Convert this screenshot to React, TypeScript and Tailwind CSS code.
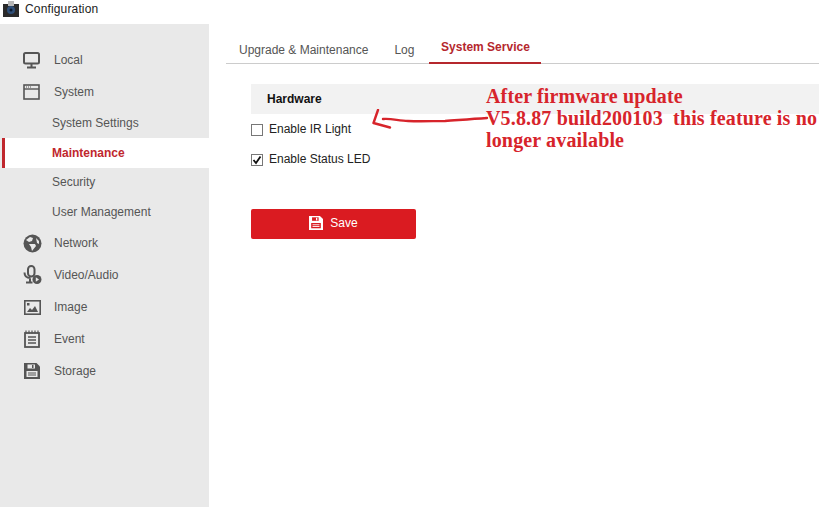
import React from 'react';

const font = { fontFamily: '"Liberation Sans", Arial, sans-serif' };

const MonitorIcon = () => (
  <svg width="18" height="17" viewBox="0 0 18 17" fill="none">
    <rect x="1" y="1" width="15" height="10.5" rx="1.5" stroke="#555" strokeWidth="2" />
    <path d="M8.5 12v3M4 15.5h9" stroke="#555" strokeWidth="2" />
  </svg>
);

const SystemIcon = () => (
  <svg width="18" height="16" viewBox="0 0 18 16" fill="none">
    <rect x="1" y="1" width="15" height="14" stroke="#555" strokeWidth="1.6" />
    <path d="M1 5h15" stroke="#555" strokeWidth="1.4" />
    <path d="M3 3h1M5 3h1M7 3h1" stroke="#555" strokeWidth="1" />
  </svg>
);

const GlobeIcon = () => (
  <svg width="19" height="19" viewBox="0 0 19 19">
    <circle cx="9.5" cy="9.5" r="9" fill="#555" />
    <path d="M3 6l4-3 3 1-1 3-3 1zM6 10l6 0 1 2-4 5-1-4zM13 4l3 3 0 3-2-1z" fill="#e9e9e9" />
  </svg>
);

const VideoAudioIcon = () => (
  <svg width="19" height="20" viewBox="0 0 19 20" fill="none">
    <rect x="5" y="1" width="6.500" height="10.500" rx="3.250" stroke="#555" strokeWidth="2" />
    <path d="M1.500 7.500c0 3.500 2 5.500 6 5.500M7 13.500v3M3 17.500h6.500" stroke="#555" strokeWidth="2" />
    <circle cx="14" cy="14.500" r="4.500" fill="#555" />
    <path d="M12.800 12.300l3.200 2.200-3.200 2.200z" fill="#e9e9e9" />
  </svg>
);

const ImageIcon = () => (
  <svg width="17" height="15" viewBox="0 0 17 15">
    <rect x="0.800" y="0.800" width="15.400" height="13.400" fill="none" stroke="#555" strokeWidth="1.600" />
    <rect x="3" y="3" width="2.500" height="2.500" fill="#555" />
    <path d="M3 12l3-4 2 2 3-4 3 6z" fill="#555" />
  </svg>
);

const EventIcon = () => (
  <svg width="16" height="18" viewBox="0 0 16 18" fill="none">
    <rect x="1" y="3" width="14" height="14" stroke="#555" strokeWidth="1.800" />
    <path d="M2 0.500v3M5 0.500v3M8 0.500v3M11 0.500v3M14 0.500v3" stroke="#555" strokeWidth="1.200" />
    <path d="M4 7h8M4 10h8M4 13h8" stroke="#555" strokeWidth="1.300" />
  </svg>
);

const StorageIcon = ({ color = '#555', hole = '#e9e9e9', size = 16 }: { color?: string; hole?: string; size?: number }) => (
  <svg width={size} height={size} viewBox="0 0 16 16">
    <path d="M0 0h12.500L16 3.500V16H0z" fill={color} />
    <rect x="3.500" y="1.500" width="7.500" height="4" fill={hole} />
    <rect x="8" y="2" width="1.500" height="3" fill={color} />
    <rect x="2.500" y="8" width="11" height="6" fill={hole} />
    <path d="M4 10h8M4 12h8" stroke={color} strokeWidth="1" />
  </svg>
);

const topClass = 'flex h-8 items-center text-[12px] text-[#555]';
const subClass = 'flex h-[30px] items-center pl-[52px] text-[12px] text-[#555]';

const NavItem = ({ icon, label }: { icon: React.ReactNode; label: string }) => (
  <div className={topClass}>
    <div className="flex w-[54px] justify-center pl-3 pr-[2px]">{icon}</div>
    <span>{label}</span>
  </div>
);

export default function App() {
  return (
    <div className="flex h-[507px] w-[819px] flex-col overflow-hidden bg-white" style={font}>
      <div className="flex h-6 items-center gap-[6px] pb-[6px] pl-[3px] text-[12px] tracking-[0.15px] text-[#222]">
        <svg width="16" height="16" viewBox="0 0 16 16">
          <rect x="0" y="3" width="16" height="13" fill="#2a2a2a" />
          <rect x="5" y="0" width="6" height="5" fill="#b8b8b8" />
          <circle cx="8" cy="9" r="4" fill="#2f4f78" />
          <circle cx="8" cy="9" r="1.500" fill="#0c1a30" />
        </svg>
        <span>Configuration</span>
      </div>

      <div className="flex flex-1">
        <aside className="w-[209px] bg-[#e9e9e9] pt-5">
          <NavItem icon={<MonitorIcon />} label="Local" />
          <NavItem icon={<SystemIcon />} label="System" />
          <div className={subClass}>System Settings</div>
          <div className="ml-[2px] flex h-[30px] items-center border-l-[3px] border-[#c0272d] bg-white pl-[47px] text-[12px] font-bold text-[#c0272d]">
            Maintenance
          </div>
          <div className="flex h-[29px] items-center pb-[2px] pl-[52px] text-[12px] text-[#555]">Security</div>
          <div className={subClass}>User Management</div>
          <NavItem icon={<GlobeIcon />} label="Network" />
          <NavItem icon={<VideoAudioIcon />} label="Video/Audio" />
          <NavItem icon={<ImageIcon />} label="Image" />
          <NavItem icon={<EventIcon />} label="Event" />
          <NavItem icon={<StorageIcon />} label="Storage" />
        </aside>

        <main className="relative flex-1 pl-[17px]">
          <div className="flex h-10 border-b border-[#ccc] pl-[13px] text-[12px] text-[#555]">
            <div className="flex h-10 items-center pt-[11px]">Upgrade &amp; Maintenance</div>
            <div className="ml-[26px] flex h-10 items-center pt-[11px]">Log</div>
            <div className="ml-[15px] flex h-10 w-[112px] items-center justify-center border-b-2 border-[#b5272d] pt-[7px] font-bold text-[#b5272d]">
              System Service
            </div>
          </div>

          <div className="ml-[25px] mt-5">
            <div className="flex h-[30px] items-center bg-[#f2f2f2] pl-4 text-[12px] font-bold text-[#111]">Hardware</div>
            <label className="flex h-[30px] items-center gap-[6px] text-[12px] text-[#222]">
              <span className="mt-[2px] block h-3 w-3 border border-[#777] bg-white" />
              Enable IR Light
            </label>
            <label className="flex h-[30px] items-center gap-[6px] text-[12px] text-[#222]">
              <span className="mt-[2px] flex h-3 w-3 items-center justify-center border border-[#777] bg-white">
                <svg width="10" height="10" viewBox="0 0 10 10" fill="none">
                  <path d="M1.500 5l2.500 3 4.500-6.500" stroke="#111" strokeWidth="1.800" />
                </svg>
              </span>
              Enable Status LED
            </label>
            <button className="mt-[35px] flex h-[30px] w-[165px] items-center justify-center gap-[7px] rounded-[2px] bg-[#da1b21] pb-[2px] text-[12px] text-white">
              <StorageIcon color="#fff" hole="#da1b21" size={14} />
              Save
            </button>
          </div>

          <svg className="absolute left-[162px] top-[85px]" width="118" height="22" viewBox="0 0 118 22" fill="none">
            <path
              d="M7 1L2.500 14L19 18.500M12 10C20 9 28 12 37 12C50 12.500 62 12 74 12C88 11 100 10 116 9"
              stroke="#d7242b"
              strokeWidth="2.400"
              strokeLinecap="round"
              strokeLinejoin="round"
            />
          </svg>
          <div
            className="absolute left-[277px] top-[61px] w-[342px] text-[20px] font-bold leading-[22px] tracking-[0.15px] text-[#d7242b]"
            style={{ fontFamily: '"Liberation Serif", "Times New Roman", serif' }}
          >
            <div>After firmware update</div>
            <div className="whitespace-pre">V5.8.87 build200103  this feature is no</div>
            <div>longer available</div>
          </div>
        </main>
      </div>
    </div>
  );
}
